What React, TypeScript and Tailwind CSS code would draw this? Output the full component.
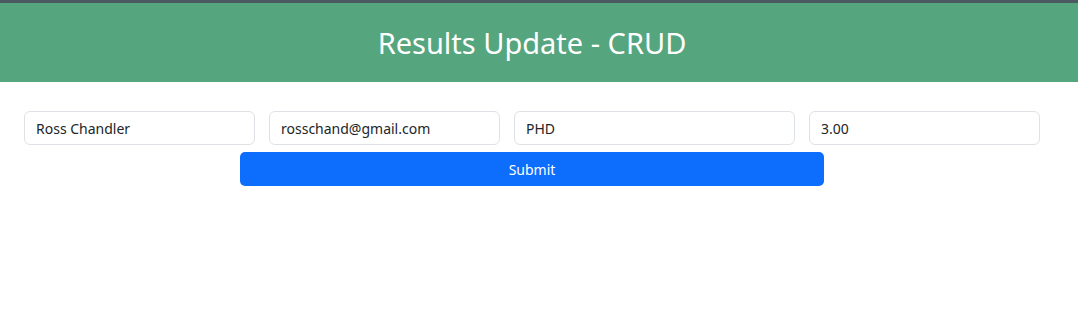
export default function App() {
  const fields = [
    { value: 'Ross Chandler', width: 'w-[231px]' },
    { value: 'rosschand@gmail.com', width: 'w-[231px]' },
    { value: 'PHD', width: 'w-[281px]' },
    { value: '3.00', width: 'w-[231px]' },
  ]

  return (
    <div className="min-h-[333px] bg-white font-['Noto_Sans',sans-serif]">
      {/* Header */}
      <div className="border-t-[3px] border-[#4b5a61] bg-[#55a57e] h-[82px] flex items-center justify-center pr-[14px]">
        <h1 className="text-[29px] text-white leading-none">Results Update - CRUD</h1>
      </div>

      {/* Form */}
      <form className="pt-[29px] pl-[24px]" onSubmit={(e) => e.preventDefault()}>
        <div className="flex gap-[14px]">
          {fields.map((f) => (
            <input
              key={f.value}
              defaultValue={f.value}
              className={`${f.width} h-[34px] px-[11px] text-[14px] text-[#212529] border border-[#dee2e6] rounded-[6px] outline-none`}
            />
          ))}
        </div>
        <button
          type="submit"
          className="ml-[216px] mt-[7px] w-[584px] h-[34px] bg-[#0d6efd] text-white text-[14px] rounded-[5px]"
        >
          Submit
        </button>
      </form>
    </div>
  )
}
